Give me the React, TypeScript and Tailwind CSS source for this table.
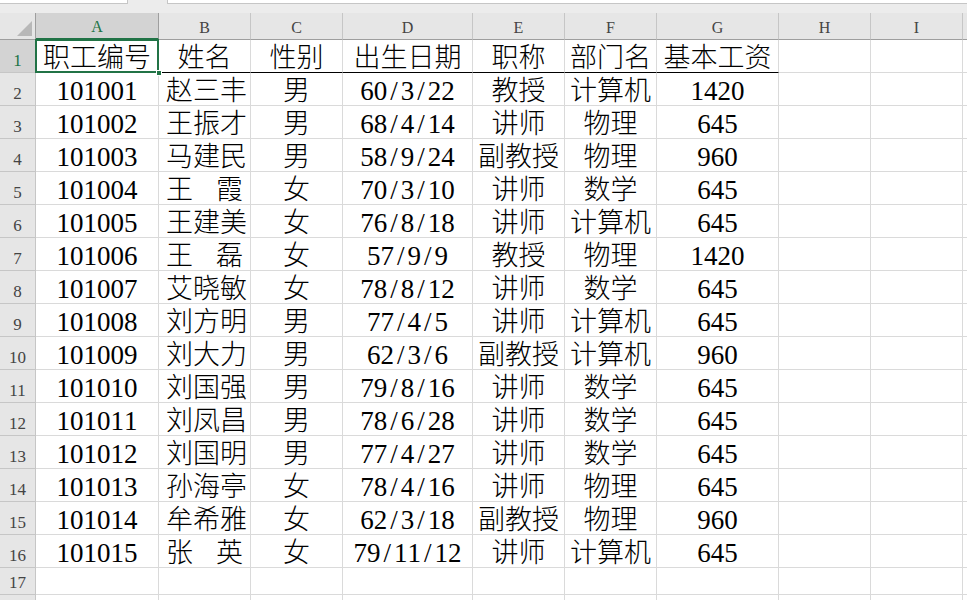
import React from "react"

const cols = ["A", "B", "C", "D", "E", "F", "G", "H", "I", ""]

const header = ["职工编号", "姓名", "性别", "出生日期", "职称", "部门名", "基本工资"]

const rows: string[][] = [
  ["101001", "赵三丰", "男", "60/3/22", "教授", "计算机", "1420"],
  ["101002", "王振才", "男", "68/4/14", "讲师", "物理", "645"],
  ["101003", "马建民", "男", "58/9/24", "副教授", "物理", "960"],
  ["101004", "王霞", "女", "70/3/10", "讲师", "数学", "645"],
  ["101005", "王建美", "女", "76/8/18", "讲师", "计算机", "645"],
  ["101006", "王磊", "女", "57/9/9", "教授", "物理", "1420"],
  ["101007", "艾晓敏", "女", "78/8/12", "讲师", "数学", "645"],
  ["101008", "刘方明", "男", "77/4/5", "讲师", "计算机", "645"],
  ["101009", "刘大力", "男", "62/3/6", "副教授", "计算机", "960"],
  ["101010", "刘国强", "男", "79/8/16", "讲师", "数学", "645"],
  ["101011", "刘凤昌", "男", "78/6/28", "讲师", "数学", "645"],
  ["101012", "刘国明", "男", "77/4/27", "讲师", "数学", "645"],
  ["101013", "孙海亭", "女", "78/4/16", "讲师", "物理", "645"],
  ["101014", "牟希雅", "女", "62/3/18", "副教授", "物理", "960"],
  ["101015", "张英", "女", "79/11/12", "讲师", "计算机", "645"],
]

const gridCols = "grid grid-cols-[36px_123px_92px_92px_130px_92px_92px_122px_92px_92px_92px]"
const font = "font-['Liberation_Serif','Noto_Sans_CJK_SC',serif]"

function RowHead({ n, active = false }: { n?: number; active?: boolean }) {
  return (
    <div
      className={`flex items-end justify-center border-r border-b border-[#c6c6c6] pb-[3px] text-[17px] leading-none ${
        active ? "bg-[#d3d3d3] text-[#217346]" : "bg-[#e6e6e6] text-[#444]"
      }`}
    >
      {n}
    </div>
  )
}

function Cell({ children, className = "" }: { children?: React.ReactNode; className?: string }) {
  return (
    <div className={`flex items-end justify-center overflow-visible whitespace-nowrap border-r border-b border-[#dadada] text-[27px] font-light leading-none text-black ${className}`}>
      {children}
    </div>
  )
}

// half-width, fixed pitch digits like the sheet's font
function Num({ text }: { text: string }) {
  return (
    <span className="flex">
      {text.split("").map((c, i) => (
        <span key={i} className="inline-block w-[0.5em] text-center">
          {c}
        </span>
      ))}
    </span>
  )
}

function Name({ text }: { text: string }) {
  return (
    <Cell className="!justify-between px-[7px]">
      {text.split("").map((c, i) => (
        <span key={i}>{c}</span>
      ))}
    </Cell>
  )
}

export default function App() {
  return (
    <div className={`h-[600px] w-[967px] overflow-hidden bg-white ${font}`}>
      {/* formula bar remnant */}
      <div className="flex h-[13px] items-start bg-[#ececec]">
        <div className="h-[4px] w-[128px] border-r border-b border-[#c6c6c6] bg-white" />
        <div className="ml-[39px] h-[4px] flex-1 border-l border-b border-[#c6c6c6] bg-white" />
      </div>

      {/* column headers */}
      <div className={`${gridCols} h-[27px]`}>
        <div className="relative border-r border-b border-[#9e9e9e] bg-[#e6e6e6]">
          <svg className="absolute right-[3px] bottom-[3px]" width="15" height="15" viewBox="0 0 15 15">
            <polygon points="15,0 15,15 0,15" fill="#b8b8b8" />
          </svg>
        </div>
        {cols.map((c, i) => (
          <div
            key={i}
            className={`flex items-end justify-center border-r border-b pb-[3px] text-[16px] leading-none ${
              i === 0
                ? "border-[#9e9e9e] border-b-[#217346] border-b-2 bg-[#d3d3d3] text-[#217346]"
                : "border-[#c6c6c6] border-b-[#9e9e9e] bg-[#e6e6e6] text-[#444]"
            }`}
          >
            {c}
          </div>
        ))}
      </div>

      {/* row 1 */}
      <div className={`${gridCols} h-[33px]`}>
        <RowHead n={1} active />
        <Cell className="relative">
          {header[0]}
          <div className="absolute -top-px -left-px -right-[1px] -bottom-px border-2 border-[#217346]" />
          <div className="absolute -right-[4px] -bottom-[4px] h-[6px] w-[6px] border border-white bg-[#217346]" />
        </Cell>
        {header.slice(1).map((h, i) => (
          <Cell key={i} className="border-b-black">
            {h}
          </Cell>
        ))}
        <Cell />
        <Cell />
        <Cell />
      </div>

      {rows.map((r, ri) => (
        <div key={ri} className={`${gridCols} h-[33px]`}>
          <RowHead n={ri + 2} />
          <Cell>
            <Num text={r[0]} />
          </Cell>
          <Name text={r[1]} />
          <Cell>{r[2]}</Cell>
          <Cell>
            <Num text={r[3]} />
          </Cell>
          <Cell>{r[4]}</Cell>
          <Cell>{r[5]}</Cell>
          <Cell>
            <Num text={r[6]} />
          </Cell>
          <Cell />
          <Cell />
          <Cell />
        </div>
      ))}

      <div className={`${gridCols} h-[27px]`}>
        <RowHead n={17} />
        {cols.map((c, i) => (
          <Cell key={i} />
        ))}
      </div>
      <div className={`${gridCols} h-[27px]`}>
        <RowHead />
        {cols.map((c, i) => (
          <Cell key={i} />
        ))}
      </div>
    </div>
  )
}
